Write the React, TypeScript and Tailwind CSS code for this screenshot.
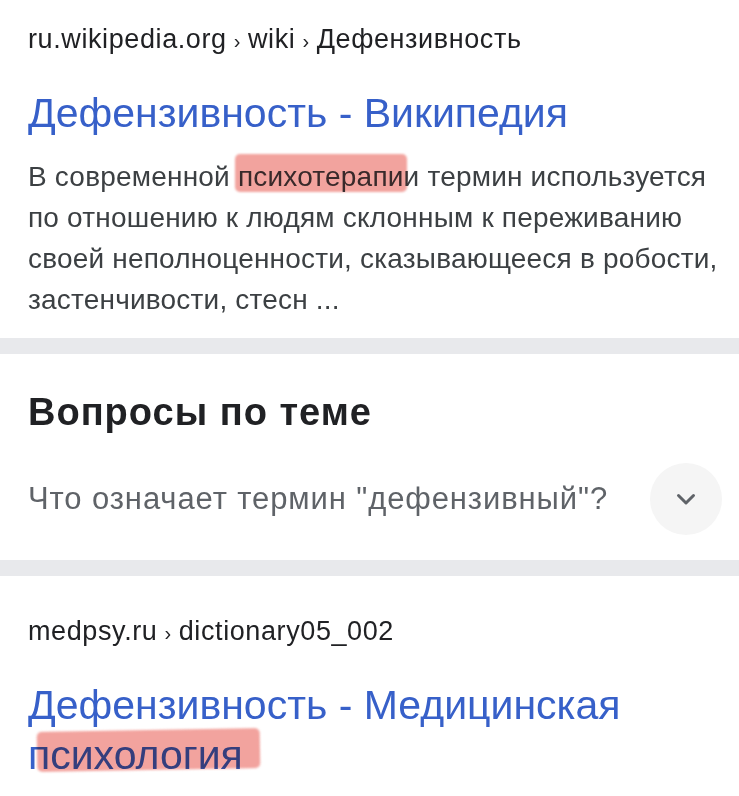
import React from 'react';

const font = "font-['Liberation_Sans','Helvetica','Arial',sans-serif]";

function Marker({ children, className }: { children: React.ReactNode; className?: string }) {
  return (
    <span className="relative inline-block">
      <span
        className={`pointer-events-none absolute rounded-[5px] bg-[#ee847d] opacity-75 mix-blend-multiply blur-[1px] ${className || ''}`}
      />
      {children}
    </span>
  );
}

function Crumb({ parts }: { parts: string[] }) {
  return (
    <div className="text-[27px] leading-[32px] tracking-[0.6px] text-[#202124]">
      {parts.map((p, i) => (
        <React.Fragment key={i}>
          {i > 0 && <span className="mx-[7px] text-[20px]">›</span>}
          {p}
        </React.Fragment>
      ))}
    </div>
  );
}

export default function App() {
  return (
    <div className={`min-h-[796px] w-[739px] overflow-hidden bg-white ${font}`}>
      <section className="px-[28px] pb-[18px] pt-[23px]">
        <Crumb parts={['ru.wikipedia.org', 'wiki', 'Дефензивность']} />
        <h2 className="mt-[32px] text-[41px] leading-[48px] text-[#3760c9]">Дефензивность - Википедия</h2>
        <p className="mt-[19px] whitespace-nowrap text-[28px] leading-[41px] tracking-[0.2px] text-[#3c4043]">
          В современной{' '}
          <Marker className="-left-[3px] -right-[3px] -top-[2px] bottom-[5px]">психотерапи</Marker>и термин используется
          <br />
          по отношению к людям склонным к переживанию
          <br />
          своей неполноценности, сказывающееся в робости,
          <br />
          застенчивости, стесн ...
        </p>
      </section>

      <div className="h-[16px] bg-[#e8e9ec]" />

      <section className="px-[28px] pb-[25px] pt-[36px]">
        <h3 className="text-[38px] font-bold leading-[44px] tracking-[1px] text-[#202124]">Вопросы по теме</h3>
        <div className="mt-[29px] flex h-[72px] items-center justify-between">
          <span className="text-[31px] leading-[72px] tracking-[0.9px] text-[#5f6368]">Что означает термин "дефензивный"?</span>
          <button className="-mr-[11px] flex h-[72px] w-[72px] items-center justify-center rounded-full bg-[#f5f5f5]">
            <svg width="22" height="14" viewBox="0 0 22 14" fill="none">
              <path d="M3.5 3.5l7.5 7.5 7.5-7.5" stroke="#5f6368" strokeWidth="3" strokeLinecap="round" strokeLinejoin="round" />
            </svg>
          </button>
        </div>
      </section>

      <div className="h-[16px] bg-[#e8e9ec]" />

      <section className="px-[28px] pt-[39px]">
        <Crumb parts={['medpsy.ru', 'dictionary05_002']} />
        <h2 className="mt-[31px] text-[41px] leading-[50px] text-[#3760c9]">
          Дефензивность - Медицинская
          <br />
          <Marker className="left-[9px] -right-[17px] top-0 bottom-[10px] -rotate-[1deg]">психология</Marker>
        </h2>
      </section>
    </div>
  );
}
